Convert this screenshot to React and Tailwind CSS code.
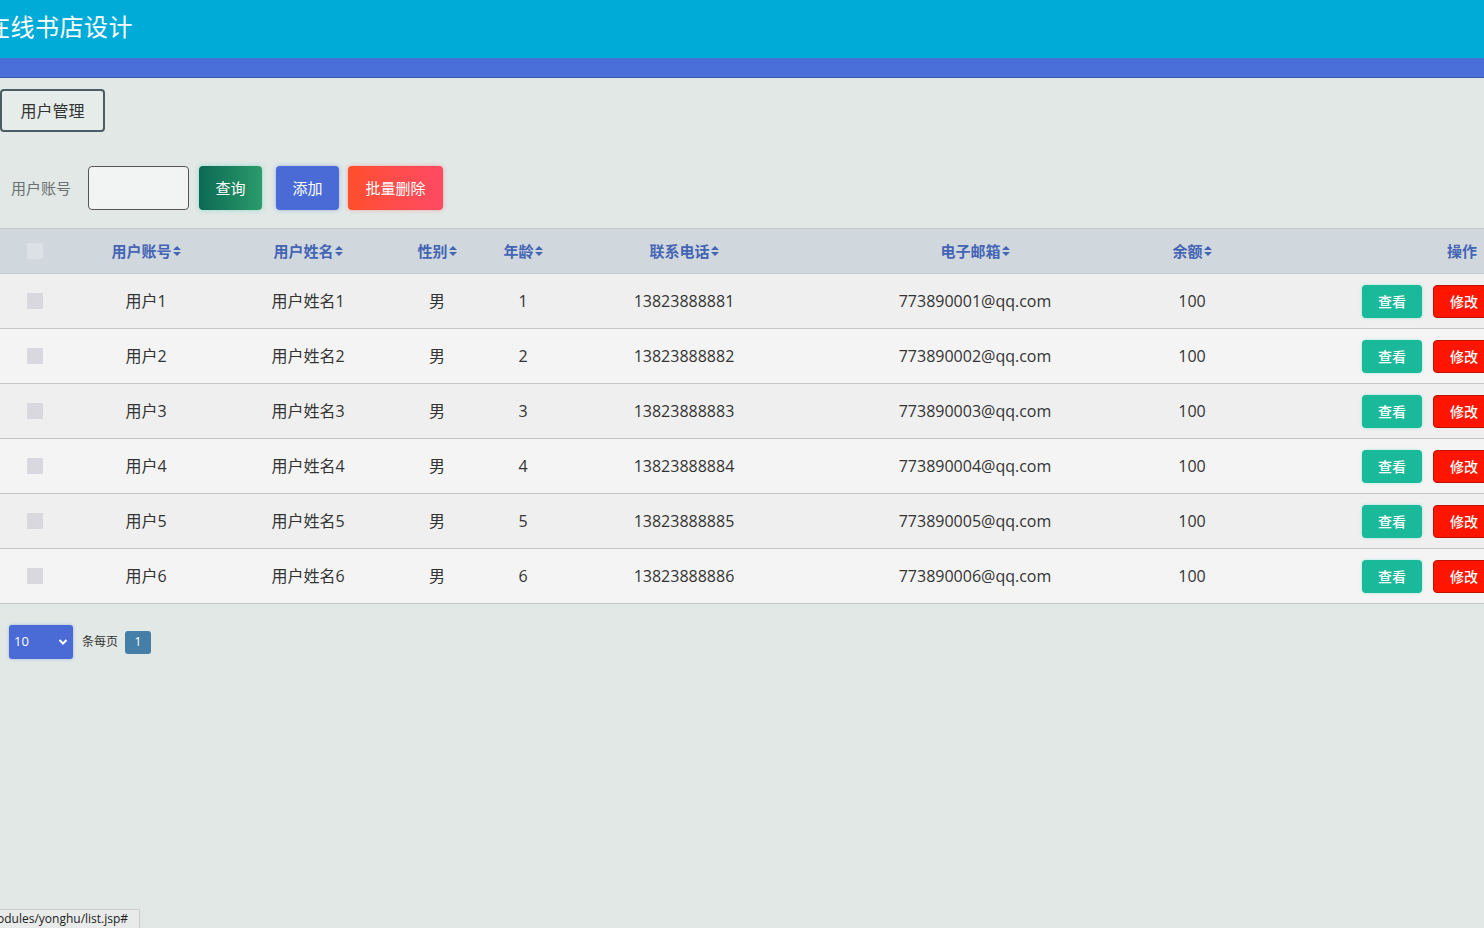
import React from "react";

const users = [1, 2, 3, 4, 5, 6].map((n) => ({
  account: "用户" + n,
  name: "用户姓名" + n,
  sex: "男",
  age: n,
  phone: "1382388888" + n,
  email: "77389000" + n + "@qq.com",
  money: 100,
}));

const cols = "grid grid-cols-[70px_152px_172px_86px_86px_236px_346px_88px_1fr] items-center";

const SortIcon = () => (
  <svg width="8" height="12" viewBox="0 0 8 12" className="inline-block ml-[1px]">
    <path d="M0 5 L4 1 L8 5 Z" fill="currentColor" />
    <path d="M0 7 L4 11 L8 7 Z" fill="currentColor" />
  </svg>
);

const Th = ({ children }) => (
  <div className="flex justify-center items-center">
    <span>{children}</span>
    <SortIcon />
  </div>
);

export default function App() {
  return (
    <div
      className="relative w-[1484px] h-[928px] overflow-hidden bg-[#e1e8e5] text-[#333]"
      style={{ fontFamily: '"Open Sans", "Noto Sans CJK SC", sans-serif' }}
    >
      {/* top bar */}
      <div className="h-[58px] bg-[#00acd7] flex items-center pb-[5px]">
        <h1 className="ml-[-14px] text-[24px] text-white font-normal tracking-[0.5px]">在线书店设计</h1>
      </div>
      <div className="h-[20px] bg-[#4b6fd8] border-b border-[#3d58b0]"></div>

      {/* tab */}
      <div className="pt-[11px]">
        <button className="w-[105px] h-[43px] border-2 border-[#4c5c62] rounded-[4px] bg-[#e5ecea] text-[16px] text-[#333]">
          用户管理
        </button>
      </div>

      {/* search */}
      <div className="flex items-center mt-[34px] h-[44px]">
        <span className="ml-[11px] w-[61px] text-[15px] text-[#6b7070]">用户账号</span>
        <input className="ml-[16px] w-[101px] h-[44px] bg-[#f2f4f4] border border-[#555] rounded-[4px] outline-none" />
        <button className="ml-[10px] w-[63px] h-[44px] rounded-[4px] text-white text-[15px] bg-gradient-to-r from-[#0a6a52] to-[#2b9b6c] shadow-[0_0_4px_rgba(60,200,180,0.5)]">
          查询
        </button>
        <button className="ml-[14px] w-[63px] h-[44px] rounded-[4px] text-white text-[15px] bg-[#4a6bd6] shadow-[0_0_4px_rgba(90,130,230,0.5)]">
          添加
        </button>
        <button className="ml-[9px] w-[95px] h-[44px] rounded-[4px] text-white text-[15px] bg-gradient-to-r from-[#ff4e2a] to-[#ff4a63] shadow-[0_0_4px_rgba(255,80,90,0.4)]">
          批量删除
        </button>
      </div>

      {/* table */}
      <div className="mt-[18px] w-[1560px]">
        <div className={cols + " h-[46px] bg-[#d0d8de] border-t border-b border-[#c3c9cc] text-[15px] font-semibold text-[#4464b4]"}>
          <div className="flex justify-center">
            <span className="w-[16px] h-[16px] bg-[#dbe1e5] rounded-[2px]"></span>
          </div>
          <Th>用户账号</Th>
          <Th>用户姓名</Th>
          <Th>性别</Th>
          <Th>年龄</Th>
          <Th>联系电话</Th>
          <Th>电子邮箱</Th>
          <Th>余额</Th>
          <div className="pl-[211px]">操作</div>
        </div>
        {users.map((u, i) => (
          <div
            key={i}
            className={
              cols +
              " h-[55px] border-b border-[#c4c6c6] text-[16px] text-[#333] " +
              (i % 2 === 0 ? "bg-[#efefef]" : "bg-[#f4f4f4]")
            }
          >
            <div className="flex justify-center">
              <span className="w-[16px] h-[16px] bg-[#d8d8de] rounded-[1px]"></span>
            </div>
            <div className="text-center">{u.account}</div>
            <div className="text-center">{u.name}</div>
            <div className="text-center">{u.sex}</div>
            <div className="text-center">{u.age}</div>
            <div className="text-center">{u.phone}</div>
            <div className="text-center">{u.email}</div>
            <div className="text-center">{u.money}</div>
            <div className="flex items-center pl-[126px] gap-[11px] text-[14px] font-medium text-white">
              <button className="w-[60px] h-[33px] rounded-[4px] bg-[#1ab99a] shadow-[0_0_3px_rgba(60,220,200,0.5)]">查看</button>
              <button className="w-[62px] h-[33px] rounded-[4px] bg-[#ff1500] border border-[#c01000]">修改</button>
              <button className="w-[62px] h-[33px] rounded-[4px] bg-[#e04040]">删除</button>
            </div>
          </div>
        ))}
      </div>

      {/* pagination */}
      <div className="flex items-center mt-[21px] ml-[9px]">
        <div className="w-[64px] h-[34px] bg-[#4a6bd6] rounded-[3px] flex items-center justify-between px-[5px] text-white text-[13px] shadow-[0_0_3px_rgba(90,130,230,0.5)]">
          <span>10</span>
          <svg width="10" height="8" viewBox="0 0 10 8">
            <path d="M1.5 2 L5 5.5 L8.5 2" stroke="white" strokeWidth="2" fill="none" />
          </svg>
        </div>
        <span className="ml-[9px] text-[12px] text-[#333]">条每页</span>
        <span className="ml-[7px] w-[26px] h-[23px] bg-[#457ea6] rounded-[3px] text-white text-[12px] flex items-center justify-center">
          1
        </span>
      </div>

      {/* status bubble */}
      <div className="absolute left-0 bottom-0 h-[19px] w-[140px] bg-[#e8ebea] border-t border-r border-[#c8cccc] rounded-tr-[2px] text-[12px] text-[#222] flex items-center whitespace-nowrap overflow-hidden">
        <span className="ml-[-3px]">odules/yonghu/list.jsp#</span>
      </div>
    </div>
  );
}
